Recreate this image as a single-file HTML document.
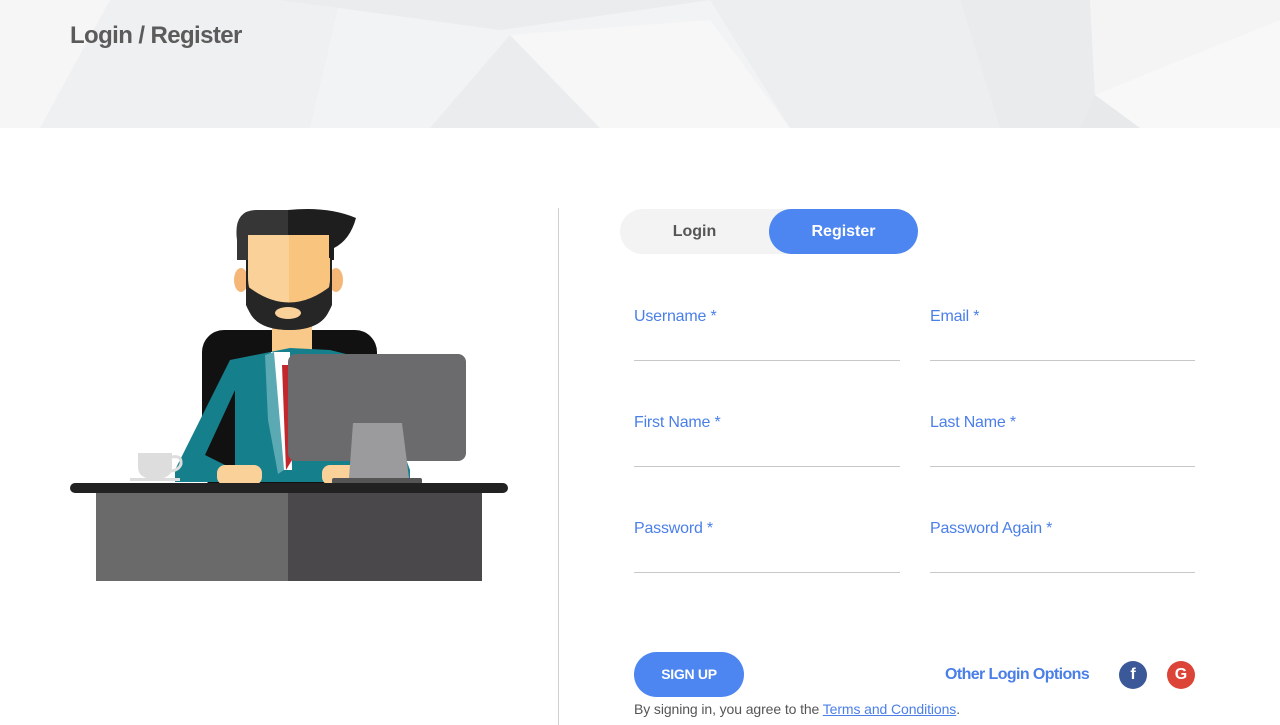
<!DOCTYPE html>
<html><head><meta charset="utf-8"><style>
*{margin:0;padding:0;box-sizing:border-box}
body{width:1280px;height:725px;overflow:hidden;background:#fff;font-family:"Liberation Sans",Arial,sans-serif;position:relative}
.hdr{position:absolute;left:0;top:0;width:1280px;height:128px;background:#f2f3f4;overflow:hidden}
.hdr h1{position:absolute;left:70px;top:22px;font-size:24px;font-weight:bold;color:#5b5b5b;letter-spacing:-0.6px}
.div{position:absolute;left:558px;top:208px;width:1px;height:517px;background:#d0d0d0}
.tabs{position:absolute;left:620px;top:209px;width:298px;height:45px;border-radius:23px;background:#f3f3f3}
.tab{position:absolute;top:0;height:45px;line-height:46px;text-align:center;font-size:16px;font-weight:bold}
.lbl{position:absolute;font-size:16px;color:#4a7fe8;letter-spacing:-0.2px}
.ln{position:absolute;height:1px;background:#c8c8c8}
.btn{position:absolute;left:634px;top:652px;width:110px;height:45px;border-radius:23px;background:#4d86f0;color:#fff;font-size:14px;font-weight:bold;text-align:center;line-height:45px;letter-spacing:-0.3px}
.circ{position:absolute;width:28px;height:28px;border-radius:50%;color:#fff;font-weight:bold;text-align:center;line-height:28px;font-size:16px}
</style></head><body>
<div class="hdr">
<svg width="1280" height="128" style="position:absolute;left:0;top:0">
<polygon points="0,0 110,0 40,128 0,128" fill="#f6f6f7"/>
<polygon points="110,0 340,0 310,128 40,128" fill="#eff0f1"/>
<polygon points="280,0 710,0 500,30" fill="#ebeced"/>
<polygon points="510,35 430,128 600,128" fill="#ebeced"/>
<polygon points="510,35 710,20 790,128 600,128" fill="#f7f7f7"/>
<polygon points="710,0 960,0 1000,128 790,128" fill="#edeeef"/>
<polygon points="960,0 1090,0 1095,95 1080,128 1000,128" fill="#eaebec"/>
<polygon points="1090,0 1280,0 1280,20 1095,95" fill="#f4f4f5"/>
<polygon points="1095,95 1280,20 1280,128 1140,128" fill="#f8f8f8"/>
<polygon points="1095,95 1140,128 1080,128" fill="#e8e9ea"/>
</svg>
<h1>Login / Register</h1>
</div>

<svg width="520" height="400" style="position:absolute;left:60px;top:200px" viewBox="60 200 520 400">
<rect x="202" y="330" width="175" height="160" rx="22" fill="#111"/>
<rect x="272" y="300" width="40" height="60" fill="#f9c98a"/>
<polygon points="175,470 230,360 290,348 330,350 370,360 410,470 410,482 175,482" fill="#167f8c"/>
<polygon points="205,455 235,390 235,470" fill="#111"/>
<polygon points="271,352 290,352 292,470 282,470" fill="#fff"/>
<polygon points="282,365 290,365 292,460 286,470" fill="#c1272d"/>
<polygon points="265,355 274,352 284,470 278,474 268,420" fill="#5aa9b3"/>
<ellipse cx="241" cy="280" rx="7" ry="12" fill="#f4b778"/>
<ellipse cx="336" cy="280" rx="7" ry="12" fill="#f4b778"/>
<path d="M246 225 h86 v70 q0 35 -43 35 q-43 0 -43 -35z" fill="#222"/>
<path d="M248 222 h82 v55 q0 35 -41 35 q-41 0 -41 -35z" fill="#fbd19a"/>
<path d="M289 222 h41 v55 q0 35 -41 35z" fill="#f9c47e"/>
<path d="M246 285 q43 35 86 0 v20 q-10 25 -43 25 q-33 0 -43 -25z" fill="#262626"/>
<ellipse cx="288" cy="313" rx="13" ry="6" fill="#fbd19a"/>
<path d="M237 240 q-4 -30 20 -30 h31 v25 h-40 v20 z" fill="#363636"/>
<path d="M288 210 q40 -4 68 8 q-6 22 -22 30 v10 h-5 v-23 h-41z" fill="#1e1e1e"/>
<path d="M237 240 v20 h11 v-25z" fill="#363636"/>
<path d="M330 230 v30 h4 v-30z" fill="#1e1e1e"/>
<rect x="217" y="465" width="45" height="20" rx="8" fill="#fbd19a"/>
<rect x="322" y="465" width="40" height="20" rx="8" fill="#fbd19a"/>
<rect x="288" y="354" width="178" height="107" rx="8" fill="#6b6a6c"/>
<polygon points="353,423 402,423 409,478 349,478" fill="#9b9a9c"/>
<rect x="332" y="478" width="90" height="6" rx="2" fill="#555"/>
<path d="M138 453 h34 v14 q0 12 -17 12 q-17 0 -17 -12z" fill="#ddd"/>
<path d="M172 457 q10 -2 9 7 q-2 6 -10 7" stroke="#ddd" stroke-width="3" fill="none"/>
<rect x="130" y="478" width="50" height="3" fill="#ddd"/>
<rect x="70" y="483" width="438" height="10" rx="5" fill="#222"/>
<rect x="96" y="493" width="192" height="88" fill="#6b6a6b"/>
<rect x="288" y="493" width="194" height="88" fill="#4a484a"/>
</svg>

<div class="div"></div>
<div class="tabs">
<div class="tab" style="left:0;width:149px;color:#555">Login</div>
<div class="tab" style="left:149px;width:149px;background:#4d86f0;border-radius:23px;color:#fff">Register</div>
</div>

<div class="lbl" style="left:634px;top:308px">Username *</div>
<div class="lbl" style="left:930px;top:308px">Email *</div>
<div class="ln" style="left:634px;top:360px;width:266px"></div>
<div class="ln" style="left:930px;top:360px;width:265px"></div>
<div class="lbl" style="left:634px;top:414px">First Name *</div>
<div class="lbl" style="left:930px;top:414px">Last Name *</div>
<div class="ln" style="left:634px;top:466px;width:266px"></div>
<div class="ln" style="left:930px;top:466px;width:265px"></div>
<div class="lbl" style="left:634px;top:520px">Password *</div>
<div class="lbl" style="left:930px;top:520px">Password Again *</div>
<div class="ln" style="left:634px;top:572px;width:266px"></div>
<div class="ln" style="left:930px;top:572px;width:265px"></div>

<div class="btn">SIGN UP</div>
<div style="position:absolute;left:945px;top:666px;font-size:16px;font-weight:bold;color:#4a7fe8;letter-spacing:-0.6px">Other Login Options</div>
<div class="circ" style="left:1119px;top:661px;background:#3b5998">f</div>
<div class="circ" style="left:1167px;top:661px;background:#db4437">G</div>
<div style="position:absolute;left:634px;top:701px;font-size:14px;color:#555;letter-spacing:-0.1px">By signing in, you agree to the <span style="color:#4a7fe8;text-decoration:underline">Terms and Conditions</span>.</div>
</body></html>
